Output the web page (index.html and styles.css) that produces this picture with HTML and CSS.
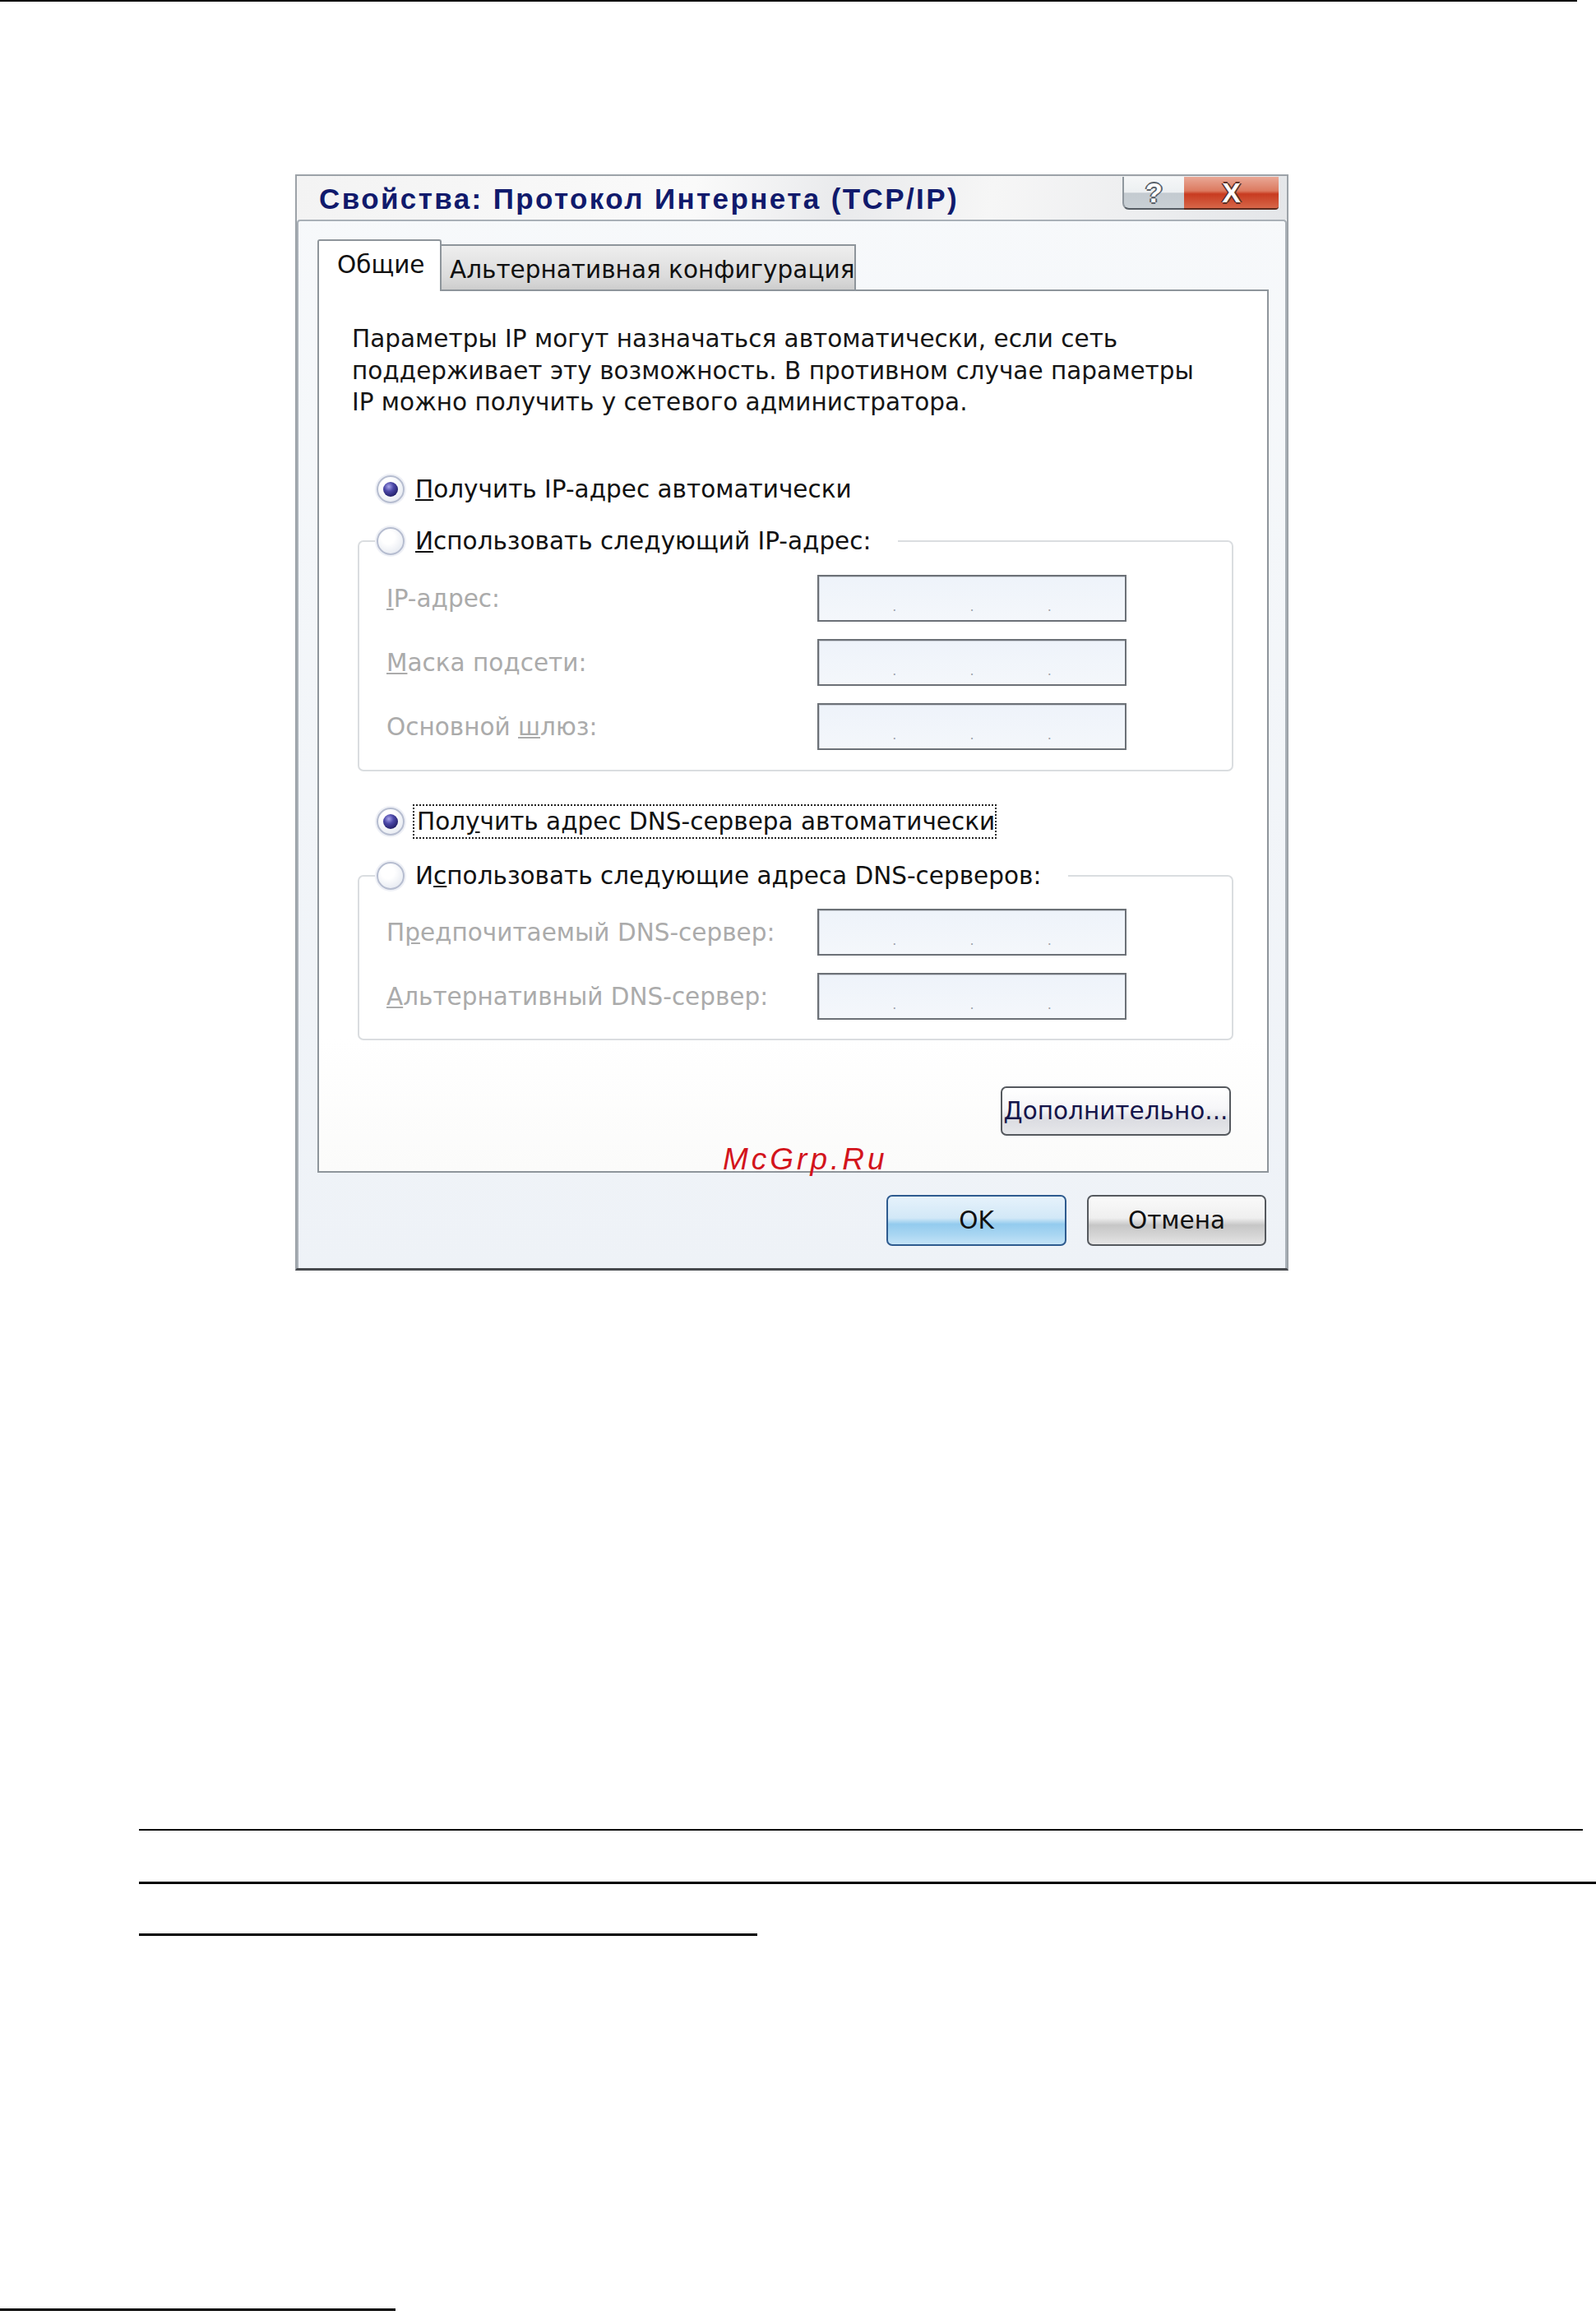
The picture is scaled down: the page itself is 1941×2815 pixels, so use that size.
FILE: index.html
```html
<!DOCTYPE html>
<html>
	<head>
		<title>Свойства: Протокол Интернета (TCP/IP)</title>
		<link rel="stylesheet" href="styles.css">
	</head>
	<body>
		<div class="page">
			<div class="rule-top"></div>

			<div class="dialog">
				<div class="titlebar">
					<span class="title">Свойства: Протокол Интернета (TCP/IP)</span>
					<div class="caption-buttons">
						<span class="cap-btn help">?</span>
						<span class="cap-btn close">X</span>
					</div>
				</div>

				<div class="client">
					<div class="tabs">
						<span class="tab active">Общие</span>
						<span class="tab">Альтернативная конфигурация</span>
					</div>

					<div class="panel">
						<p class="intro">
							Параметры IP могут назначаться автоматически, если сеть<br>
							поддерживает эту возможность. В противном случае параметры<br>
							IP можно получить у сетевого администратора.
						</p>

						<div class="radio-row first">
							<span class="radio checked"></span>
							<span class="radio-label"><u>П</u>олучить IP-адрес автоматически</span>
						</div>

						<fieldset class="group">
							<legend class="radio-row">
								<span class="radio"></span>
								<span class="radio-label"><u>И</u>спользовать следующий IP-адрес:</span>
							</legend>
							<div class="fields">
								<div class="field">
									<span class="field-label"><u>I</u>P-адрес:</span>
									<div class="ip-box"><span></span><i>.</i><span></span><i>.</i><span></span><i>.</i><span></span></div>
								</div>
								<div class="field">
									<span class="field-label"><u>М</u>аска подсети:</span>
									<div class="ip-box"><span></span><i>.</i><span></span><i>.</i><span></span><i>.</i><span></span></div>
								</div>
								<div class="field">
									<span class="field-label">Основной <u>ш</u>люз:</span>
									<div class="ip-box"><span></span><i>.</i><span></span><i>.</i><span></span><i>.</i><span></span></div>
								</div>
							</div>
						</fieldset>

						<div class="radio-row dns-auto">
							<span class="radio checked"></span>
							<span class="radio-label focused">Пол<u>у</u>чить адрес DNS-сервера автоматически</span>
						</div>

						<fieldset class="group dns">
							<legend class="radio-row">
								<span class="radio"></span>
								<span class="radio-label">И<u>с</u>пользовать следующие адреса DNS-серверов:</span>
							</legend>
							<div class="fields">
								<div class="field">
									<span class="field-label">П<u>р</u>едпочитаемый DNS-сервер:</span>
									<div class="ip-box"><span></span><i>.</i><span></span><i>.</i><span></span><i>.</i><span></span></div>
								</div>
								<div class="field">
									<span class="field-label"><u>А</u>льтернативный DNS-сервер:</span>
									<div class="ip-box"><span></span><i>.</i><span></span><i>.</i><span></span><i>.</i><span></span></div>
								</div>
							</div>
						</fieldset>

						<div class="advanced-row">
							<button class="btn advanced"><u>Д</u>ополнительно...</button>
						</div>

						<span class="watermark">McGrp.Ru</span>
					</div>

					<div class="actions">
						<button class="btn ok">OK</button>
						<button class="btn cancel">Отмена</button>
					</div>
				</div>
			</div>

			<div class="notes">
				<div class="rule rule-1"></div>
				<div class="rule rule-2"></div>
				<div class="rule rule-3"></div>
			</div>

			<div class="footnote-rule"></div>
		</div>
	</body>
</html>
```

FILE: styles.css
```css
body {
	margin: 0;
	background-color: #fff;
	color: #111;
	font-family: "DejaVu Sans", Verdana, sans-serif;
}

.page {
	width: 1941px;
}

.rule-top {
	width: 1918px;
	height: 2px;
	background-color: #000;
}

/* dialog window */
.dialog {
	width: 1208px;
	margin: 210px 0 0 359px;
	box-sizing: border-box;
	border: 2px solid #9ca2a8;
	border-bottom: 3px solid #474a4e;
	background: linear-gradient(to bottom, #f7f9fb, #eef2f7);
}

.titlebar {
	display: flex;
	justify-content: space-between;
	align-items: flex-start;
	height: 53px;
	background: linear-gradient(100deg, #f3f3f3 0%, #fafafa 40%, #e9eaec 55%, #f6f6f6 70%, #e4e6e9 100%);
}

.title {
	padding: 2px 0 0 27px;
	line-height: 51px;
	font-family: "Liberation Sans", Arial, sans-serif;
	font-weight: bold;
	font-size: 35px;
	color: #101a6c;
	letter-spacing: 2.4px;
	white-space: nowrap;
}

.caption-buttons {
	display: flex;
	margin: 1px 10px 0 0;
}

.cap-btn {
	display: flex;
	align-items: center;
	justify-content: center;
	height: 38px;
	font-family: "Liberation Sans", Arial, sans-serif;
	font-weight: bold;
	font-size: 34px;
	color: #fff;
	border-bottom: 2px solid #555c63;
}

.cap-btn.help {
	width: 73px;
	border-left: 2px solid #8f979e;
	border-bottom-left-radius: 8px;
	background: linear-gradient(to bottom, #f5f7f8 0%, #eceff1 50%, #c3cad0 52%, #c9d0d5 100%);
	text-shadow: -2px 0 #59616a, 2px 0 #59616a, 0 2px #59616a, 0 -2px #59616a;
}

.cap-btn.close {
	width: 115px;
	border-bottom-color: #5b2a1e;
	border-bottom-right-radius: 4px;
	background: linear-gradient(to bottom, #e9a896 0%, #dc7a60 45%, #c83b20 55%, #d76648 100%);
	text-shadow: -2px 0 #5a3028, 2px 0 #5a3028, 0 2px #5a3028, 0 -2px #5a3028;
}

.client {
	border: 2px solid #a9b0b7;
	border-bottom: none;
	border-radius: 4px 4px 0 0;
	padding: 22px 20px 27px 23px;
	font-size: 29.5px;
	line-height: 34px;
}

/* tabs */
.tabs {
	display: flex;
	align-items: flex-end;
	position: relative;
	z-index: 1;
	margin-bottom: -2px;
	white-space: nowrap;
}

.tab {
	box-sizing: border-box;
	border: 2px solid #8e959b;
	border-bottom: none;
	padding-top: 12px;
}

.tab.active {
	width: 151px;
	height: 63px;
	padding-left: 22px;
	background-color: #fff;
	border-radius: 3px 3px 0 0;
}

.tab:not(.active) {
	width: 504px;
	height: 55px;
	margin-bottom: 2px;
	padding-left: 10px;
	border-left: none;
	background: linear-gradient(to bottom, #eeeeee, #dcdcdc 70%, #cdcdcd);
}

.panel {
	position: relative;
	box-sizing: border-box;
	width: 1157px;
	height: 1074px;
	padding: 39px 41px 0 40px;
	border: 2px solid #8e959b;
	background: linear-gradient(to bottom, #fff 85%, #fbfbfa);
}

.intro {
	margin: 0;
	height: 116px;
	line-height: 38.6px;
	white-space: nowrap;
	color: #151515;
}

/* radio buttons */
.radio-row {
	display: flex;
	align-items: center;
	gap: 10px;
	height: 40px;
	white-space: nowrap;
}

.radio-row.first {
	margin: 66px 0 0 30px;
}

.radio-row.dns-auto {
	margin: 41px 0 0 30px;
}

.radio {
	position: relative;
	box-sizing: border-box;
	width: 34px;
	height: 34px;
	flex: none;
	border-radius: 50%;
	border: 2px solid #b6bdd0;
	background: radial-gradient(circle at 40% 35%, #ffffff 30%, #dde2ec 100%);
	box-shadow: 0 0 0 2px #eef0f6;
}

.radio.checked::after {
	content: "";
	position: absolute;
	left: 6px;
	top: 6px;
	width: 18px;
	height: 18px;
	border-radius: 50%;
	background: radial-gradient(circle at 38% 32%, #a9a6ec 0%, #4c48a8 35%, #23206a 75%, #1a184d 100%);
}

.radio-label {
	padding: 0 3px;
}

.radio-label.focused {
	box-sizing: border-box;
	height: 42px;
	padding-right: 0;
	line-height: 38px;
	border: 2px dotted #222;
}

/* group boxes */
.group {
	margin: 23px 0 0 7px;
	padding: 0 0 24px 33px;
	border: 2px solid #dadde0;
	border-radius: 7px;
	min-width: 0;
}

.group.dns {
	margin-top: 26px;
	padding-bottom: 23px;
}

.group legend {
	margin-left: -12px;
	padding: 0 30px 0 0;
}

.fields {
	display: flex;
	flex-direction: column;
	gap: 21px;
	margin-top: 21px;
}

.group.dns .fields {
	margin-top: 20px;
}

.field {
	display: flex;
	align-items: center;
}

.field-label {
	width: 524px;
	color: #ababab;
	white-space: nowrap;
}

.ip-box {
	display: flex;
	align-items: flex-end;
	box-sizing: border-box;
	width: 376px;
	height: 57px;
	padding-bottom: 8px;
	border: 2px solid #6c7177;
	box-shadow: inset 1px 1px 0 #c9ced6;
	background: linear-gradient(to bottom, #eef3fa, #f4f7fb);
}

.ip-box span {
	flex: 1;
}

.ip-box i {
	font-style: normal;
	font-size: 16px;
	line-height: 16px;
	color: #9ea4ab;
}

/* buttons */
.advanced-row {
	display: flex;
	justify-content: flex-end;
	margin-top: 56px;
	padding-right: 3px;
}

.btn {
	box-sizing: border-box;
	height: 60px;
	padding: 0;
	font-family: "DejaVu Sans", Verdana, sans-serif;
	font-size: 29.5px;
	color: #111;
	border: 2px solid #55595e;
	border-radius: 7px;
	background: linear-gradient(to bottom, #fbfbfb 0%, #f1f1f1 45%, #d6d6d6 62%, #e2e2e2 100%);
}

.btn.advanced {
	width: 280px;
	color: #15154a;
	background: linear-gradient(to bottom, #ffffff 0%, #f6f6f8 45%, #dcdde2 70%, #e6e7ea 100%);
}

.actions {
	display: flex;
	justify-content: flex-end;
	gap: 25px;
	margin-top: 27px;
	padding-right: 3px;
}

.btn.ok {
	width: 219px;
	height: 62px;
	border-color: #2e5b8f;
	background: linear-gradient(to bottom, #e6f2fb 0%, #d2e8f7 45%, #93cbee 58%, #a9d6f2 80%, #c4e3f7 100%);
}

.btn.cancel {
	width: 218px;
	height: 62px;
	background: linear-gradient(to bottom, #fafafa 0%, #efefef 45%, #c6c6c6 60%, #d8d8d8 85%, #e6e6e6 100%);
}

.watermark {
	position: absolute;
	left: 491px;
	top: 1037px;
	font-family: "Liberation Sans", Arial, sans-serif;
	font-style: italic;
	font-size: 37px;
	line-height: 37px;
	letter-spacing: 4px;
	color: #d3141c;
}

/* page rules below the picture */
.notes {
	margin: 679px 0 0 169px;
}

.rule {
	background-color: #000;
}

.rule-1 {
	width: 1756px;
	height: 2px;
}

.rule-2 {
	width: 1772px;
	height: 3px;
	margin-top: 62px;
}

.rule-3 {
	width: 752px;
	height: 3px;
	margin-top: 60px;
}

.footnote-rule {
	width: 481px;
	height: 3px;
	margin-top: 453px;
	background-color: #000;
}
```
